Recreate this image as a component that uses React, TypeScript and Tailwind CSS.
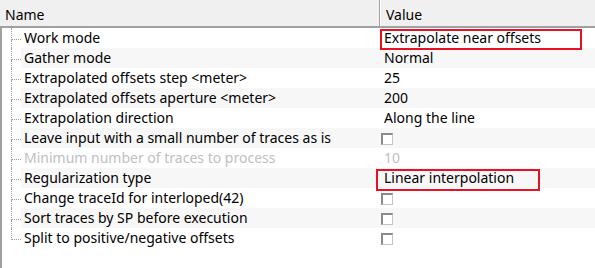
import React from "react";

type Row = {
  name: string;
  value?: string;
  check?: boolean;
  disabled?: boolean;
  box?: "a" | "b";
};

const rows: Row[] = [
  { name: "Work mode", value: "Extrapolate near offsets", box: "a" },
  { name: "Gather mode", value: "Normal" },
  { name: "Extrapolated offsets step <meter>", value: "25" },
  { name: "Extrapolated offsets aperture <meter>", value: "200" },
  { name: "Extrapolation direction", value: "Along the line" },
  { name: "Leave input with a small number of traces as is", check: true },
  { name: "Minimum number of traces to process", value: "10", disabled: true },
  { name: "Regularization type", value: "Linear interpolation", box: "b" },
  { name: "Change traceId for interloped(42)", check: true },
  { name: "Sort traces by SP before execution", check: true },
  { name: "Split to positive/negative offsets", check: true },
];

function Checkbox() {
  return (
    <div className="w-[12px] h-[12px] bg-white border-t-2 border-l-2 border-b border-r border-t-[#8a8a8a] border-l-[#8a8a8a] border-b-[#c4c4c4] border-r-[#c4c4c4] mt-[1px]" />
  );
}

export default function App() {
  return (
    <div
      className="w-[595px] h-[268px] bg-white overflow-hidden text-[14px] text-black leading-none"
      style={{ fontFamily: '"Segoe UI", "Noto Sans", "Open Sans", sans-serif' }}
    >
      {/* header */}
      <div className="flex h-[28px] bg-[#f0f0f0] border-b-2 border-b-[#a0a0a0]">
        <div className="w-[380px] flex items-center pl-[5px] pt-[3px] border-r border-r-[#a0a0a0]">
          Name
        </div>
        <div className="flex-1 flex items-center pl-[5px] pt-[3px] border-l border-l-white">Value</div>
      </div>
      {/* body */}
      <div className="flex flex-col h-[240px] border-l-2 border-l-[#a0a0a0]">
        {rows.map((r, i) => {
          const last = i === rows.length - 1;
          const alt = i % 2 === 1;
          return (
            <div key={i} className="flex h-[20px]">
              <div className="w-[19px] flex pl-[9px] shrink-0">
                <div className="w-[10px] flex flex-col">
                  <div className="h-[12px] border-l border-b border-dotted border-[#a0a0a0]" />
                  <div
                    className={
                      last
                        ? "h-[8px]"
                        : "h-[8px] border-l border-dotted border-[#a0a0a0]"
                    }
                  />
                </div>
              </div>
              <div className={"flex-1 flex " + (alt ? "bg-[#f7f7f7]" : "bg-white")}>
                <div
                  className={
                    "w-[359px] flex items-center pl-[3px] whitespace-nowrap overflow-hidden " +
                    (r.disabled ? "text-[#c0c0c0]" : "")
                  }
                >
                  {r.name}
                </div>
                <div
                  className={
                    "relative flex-1 flex items-center whitespace-nowrap " +
                    (r.check ? "pl-[1px]" : "pl-[4px]") +
                    (r.disabled ? " text-[#c0c0c0]" : "")
                  }
                >
                  {r.check ? <Checkbox /> : r.value}
                  {r.box === "a" && (
                    <div className="absolute left-0 top-[1px] w-[202px] h-[21px] border-2 border-[#e81123]" />
                  )}
                  {r.box === "b" && (
                    <div className="absolute left-[-4px] top-[1px] w-[164px] h-[22px] border-2 border-[#e81123]" />
                  )}
                </div>
              </div>
            </div>
          );
        })}
      </div>
    </div>
  );
}
